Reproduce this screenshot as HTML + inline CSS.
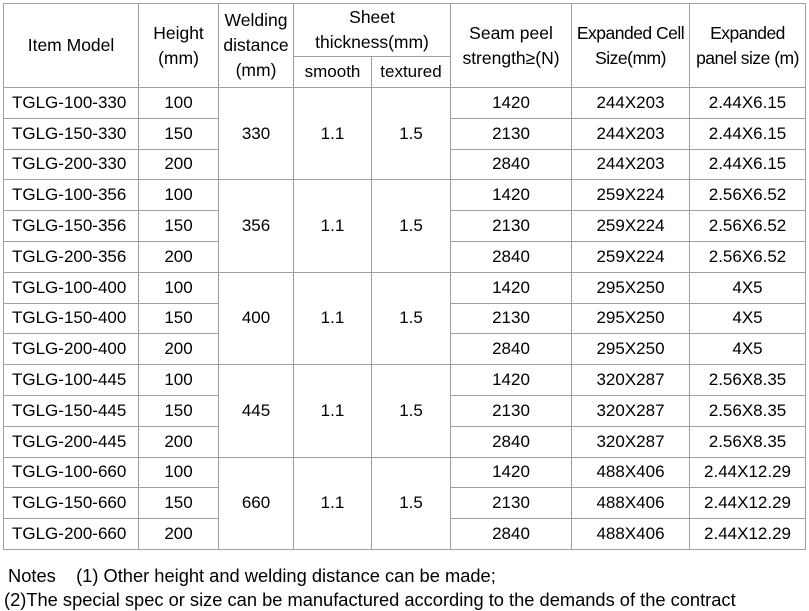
<!DOCTYPE html>
<html><head><meta charset="utf-8"><style>
body{margin:0;width:809px;height:610px;background:#fff;position:relative;overflow:hidden;font-family:"Liberation Sans",sans-serif;color:#000}
table{position:absolute;left:3px;top:3px;border-collapse:collapse;table-layout:fixed;width:802px}
td{border:1px solid #a39e96;text-align:center;font-size:17px;padding:0;height:29.8px;white-space:nowrap;overflow:hidden}
td.l{text-align:left;padding-left:8px}
.h td{line-height:25px;font-size:17.5px}
.n{position:absolute;left:8px;font-size:18.3px;white-space:nowrap}
</style></head><body>
<table>
<colgroup><col style="width:135px"><col style="width:80px"><col style="width:75px"><col style="width:78px"><col style="width:79px"><col style="width:121px"><col style="width:118px"><col style="width:116px"></colgroup>
<tr class="h" style="height:53px"><td rowspan="2" style="height:83px">Item Model</td><td rowspan="2">Height<br>(mm)</td><td rowspan="2">Welding<br>distance<br>(mm)</td><td colspan="2" style="height:52px">Sheet<br>thickness(mm)</td><td rowspan="2">Seam peel<br>strength≥(N)</td><td rowspan="2" style="letter-spacing:-0.5px">Expanded Cell<br>Size(mm)</td><td rowspan="2" style="letter-spacing:-0.5px">Expanded<br>panel size (m)</td></tr>
<tr style="height:30px"><td style="height:29px;font-size:17px">smooth</td><td style="font-size:17px">textured</td></tr>
<tr><td class="l">TGLG-100-330</td><td>100</td><td rowspan="3">330</td><td rowspan="3">1.1</td><td rowspan="3">1.5</td><td>1420</td><td>244X203</td><td>2.44X6.15</td></tr>
<tr><td class="l">TGLG-150-330</td><td>150</td><td>2130</td><td>244X203</td><td>2.44X6.15</td></tr>
<tr><td class="l">TGLG-200-330</td><td>200</td><td>2840</td><td>244X203</td><td>2.44X6.15</td></tr>
<tr><td class="l">TGLG-100-356</td><td>100</td><td rowspan="3">356</td><td rowspan="3">1.1</td><td rowspan="3">1.5</td><td>1420</td><td>259X224</td><td>2.56X6.52</td></tr>
<tr><td class="l">TGLG-150-356</td><td>150</td><td>2130</td><td>259X224</td><td>2.56X6.52</td></tr>
<tr><td class="l">TGLG-200-356</td><td>200</td><td>2840</td><td>259X224</td><td>2.56X6.52</td></tr>
<tr><td class="l">TGLG-100-400</td><td>100</td><td rowspan="3">400</td><td rowspan="3">1.1</td><td rowspan="3">1.5</td><td>1420</td><td>295X250</td><td>4X5</td></tr>
<tr><td class="l">TGLG-150-400</td><td>150</td><td>2130</td><td>295X250</td><td>4X5</td></tr>
<tr><td class="l">TGLG-200-400</td><td>200</td><td>2840</td><td>295X250</td><td>4X5</td></tr>
<tr><td class="l">TGLG-100-445</td><td>100</td><td rowspan="3">445</td><td rowspan="3">1.1</td><td rowspan="3">1.5</td><td>1420</td><td>320X287</td><td>2.56X8.35</td></tr>
<tr><td class="l">TGLG-150-445</td><td>150</td><td>2130</td><td>320X287</td><td>2.56X8.35</td></tr>
<tr><td class="l">TGLG-200-445</td><td>200</td><td>2840</td><td>320X287</td><td>2.56X8.35</td></tr>
<tr><td class="l">TGLG-100-660</td><td>100</td><td rowspan="3">660</td><td rowspan="3">1.1</td><td rowspan="3">1.5</td><td>1420</td><td>488X406</td><td>2.44X12.29</td></tr>
<tr><td class="l">TGLG-150-660</td><td>150</td><td>2130</td><td>488X406</td><td>2.44X12.29</td></tr>
<tr><td class="l">TGLG-200-660</td><td>200</td><td>2840</td><td>488X406</td><td>2.44X12.29</td></tr>
</table>
<div class="n" style="top:565px">Notes&nbsp;&nbsp;&nbsp;&nbsp;(1) Other height and welding distance can be made;</div>
<div class="n" style="top:589px;left:4px">(2)The special spec or size can be manufactured according to the demands of the contract</div>
</body></html>
